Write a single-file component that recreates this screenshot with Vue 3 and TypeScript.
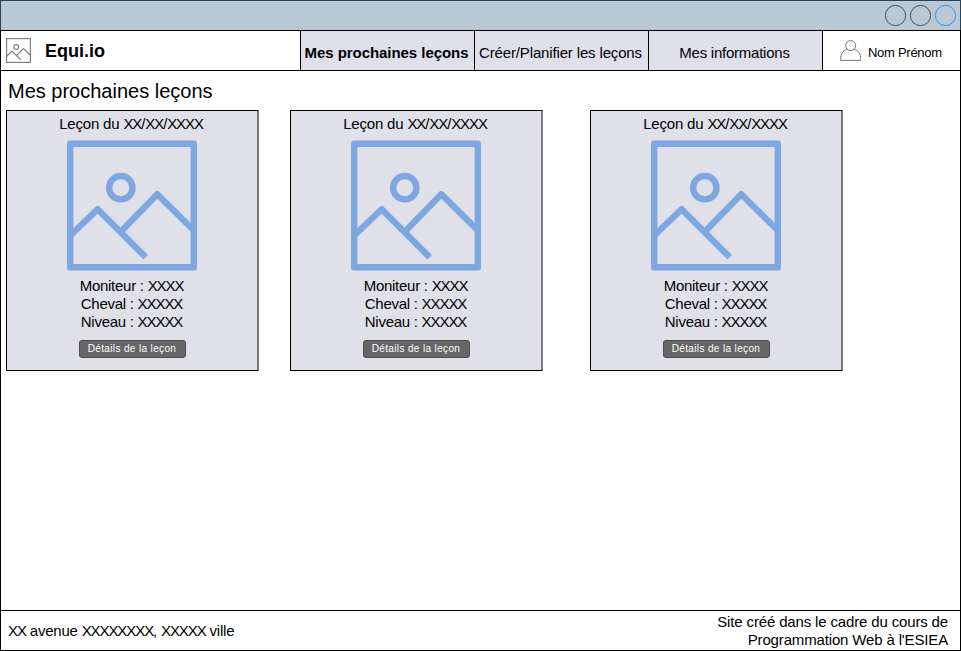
<script setup lang="ts">
interface Lesson {
  id: number
  date: string
  details: string[]
}

interface Segment {
  text: string
  placeholder: boolean
}

const tabs: { label: string; kind: string }[] = [
  { label: 'Mes prochaines leçons', kind: 'active' },
  { label: 'Créer/Planifier les leçons', kind: 'plan' },
  { label: 'Mes informations', kind: 'info' },
]

const lessons: Lesson[] = [1, 2, 3].map((id) => ({
  id,
  date: 'XX/XX/XXXX',
  details: ['Moniteur : XXXX', 'Cheval : XXXXX', 'Niveau : XXXXX'],
}))

const address = 'XX avenue XXXXXXXX, XXXXX ville'

// Runs of X are placeholders and are set tighter than the words around them.
function segments(text: string): Segment[] {
  return text
    .split(/(X{2,})/)
    .filter((part) => part !== '')
    .map((part) => ({ text: part, placeholder: part.startsWith('XX') }))
}
</script>

<template>
  <div class="window">
    <div class="titlebar">
      <svg width="73" height="26" viewBox="0 0 73 26" fill="none">
        <circle class="ring" cx="11.5" cy="12.5" r="10.1" />
        <circle class="ring" cx="36.5" cy="12.5" r="10.1" />
        <circle class="ring bright" cx="61.5" cy="12.5" r="10.1" />
      </svg>
    </div>

    <header class="header">
      <div class="brand">
        <svg class="logo" width="25" height="25" viewBox="0 0 25 25" fill="none">
          <rect x="0.6" y="0.6" width="23.8" height="23.8" />
          <circle cx="10.2" cy="9.1" r="2.4" />
          <path d="M0.6 18.2L6 13L15 22M10.5 17.5L17.5 10.5L24.4 17.2" />
        </svg>
        <span>Equi.io</span>
      </div>
      <nav class="tabs">
        <a v-for="tab in tabs" :key="tab.label" class="tab" :class="tab.kind">{{ tab.label }}</a>
      </nav>
      <div class="user">
        <svg width="22" height="22" viewBox="0 0 22 22" fill="none">
          <path class="person" d="M7.2 9.2C2.8 10.6 0.7 14.5 0.7 18.5V20.4H20.7V18.5C20.7 14.5 18.6 10.6 14.2 9.2" />
          <circle class="person" cx="10.7" cy="5.6" r="5" />
        </svg>
        <span>Nom Prénom</span>
      </div>
    </header>

    <main class="content">
      <h1>Mes prochaines leçons</h1>
      <div class="cards">
        <article v-for="lesson in lessons" :key="lesson.id" class="card">
          <h2><span v-for="(part, i) in segments('Leçon du ' + lesson.date)" :key="i" :class="{ placeholder: part.placeholder }">{{ part.text }}</span></h2>
          <svg class="picture" width="130" height="131" viewBox="0 0 130 131" fill="none">
            <rect x="3.2" y="3.7" width="123.6" height="123.6" stroke-linejoin="round" />
            <circle cx="53.8" cy="47.7" r="11.7" />
            <path d="M3.5 95.2L30.7 69.2L78.7 117.2M54 91.5L90.3 54.2L126.5 90" stroke-linejoin="round" />
          </svg>
          <ul>
            <li v-for="line in lesson.details" :key="line"><span v-for="(part, i) in segments(line)" :key="i" :class="{ placeholder: part.placeholder }">{{ part.text }}</span></li>
          </ul>
          <button type="button">Détails de la leçon</button>
        </article>
      </div>
    </main>

    <footer class="footer">
      <address><span v-for="(part, i) in segments(address)" :key="i" :class="{ placeholder: part.placeholder }">{{ part.text }}</span></address>
      <p>Site créé dans le cadre du cours de<br />Programmation Web à l'ESIEA</p>
    </footer>
  </div>
</template>

<style>
body {
  margin: 0;
}
</style>

<style scoped>
.window {
  box-sizing: border-box;
  width: 961px;
  height: 651px;
  display: flex;
  flex-direction: column;
  background: #fff;
  color: #000;
  font: 15px/18px "Liberation Sans", Arial, sans-serif;
  letter-spacing: -0.15px;
}
.titlebar {
  box-sizing: border-box;
  height: 30px;
  border: 1px solid #23445d;
  border-bottom: 0;
  background: #bac8d3;
  display: flex;
  justify-content: flex-end;
  padding: 2px 3px 0 0;
}
.ring {
  stroke: #34536b;
}
.ring.bright {
  stroke: #2294ff;
}
.header {
  box-sizing: border-box;
  height: 41px;
  border: 1px solid #000;
  display: flex;
}
.brand {
  width: 299px;
  display: flex;
  align-items: center;
  gap: 14px;
  padding-left: 5px;
  box-sizing: border-box;
  font-size: 18px;
  font-weight: bold;
  letter-spacing: 0;
}
.logo {
  stroke: #808080;
  stroke-width: 1.2;
}
.tabs {
  display: flex;
}
.tab {
  box-sizing: border-box;
  width: 174px;
  padding: 13px 2px 0 0;
  border-left: 1px solid #000;
  background: #e0e0ea;
  text-align: center;
  white-space: nowrap;
}
.tab.active {
  font-weight: bold;
  letter-spacing: -0.05px;
}
.tab.info {
  letter-spacing: -0.24px;
}
.user {
  flex: 1;
  border-left: 1px solid #000;
  display: flex;
  align-items: flex-start;
  gap: 6px;
  padding: 9px 0 0 17px;
  font-size: 13px;
  letter-spacing: -0.28px;
}
.user span {
  padding-top: 4px;
}
.person {
  stroke: #6c757d;
}
.content {
  flex: 1;
  border: solid #000;
  border-width: 0 1px;
  padding: 8px 5px 0;
}
h1 {
  margin: 0 0 7px 2px;
  font-size: 20px;
  line-height: 24px;
  font-weight: normal;
  letter-spacing: 0;
}
.cards {
  display: grid;
  grid-template-columns: 284px 300px 253px;
}
.card {
  box-sizing: border-box;
  width: 253px;
  height: 261px;
  border: 1px solid #000;
  border-right: 2px solid #78787a;
  background: #e0e0e8;
  display: flex;
  flex-direction: column;
  align-items: center;
  padding-top: 4px;
}
h2 {
  margin: 0 2px 7px 0;
  font-size: 15px;
  line-height: 18px;
  font-weight: normal;
  letter-spacing: -0.18px;
}
.picture {
  margin-right: 1px;
  stroke: #7ea6e0;
  stroke-width: 6.4;
}
ul {
  list-style: none;
  margin: 6px 1px 9px 0;
  padding: 0;
  text-align: center;
  letter-spacing: -0.26px;
}
button {
  box-sizing: border-box;
  width: 107px;
  height: 18px;
  margin-left: 1px;
  padding: 0 1px 0 0;
  border: 1px solid #4d4d4d;
  border-radius: 3px;
  background: #666;
  color: #fff;
  font: 10px/16px "Liberation Sans", Arial, sans-serif;
  letter-spacing: 0.36px;
}
.footer {
  box-sizing: border-box;
  height: 41px;
  border: 1px solid #000;
  display: flex;
  align-items: center;
  justify-content: space-between;
  padding: 0 12px 0 7px;
}
address {
  font-style: normal;
  letter-spacing: -0.22px;
}
.placeholder {
  letter-spacing: -1.08px;
}
.footer p {
  margin: 0;
  text-align: right;
}
</style>
